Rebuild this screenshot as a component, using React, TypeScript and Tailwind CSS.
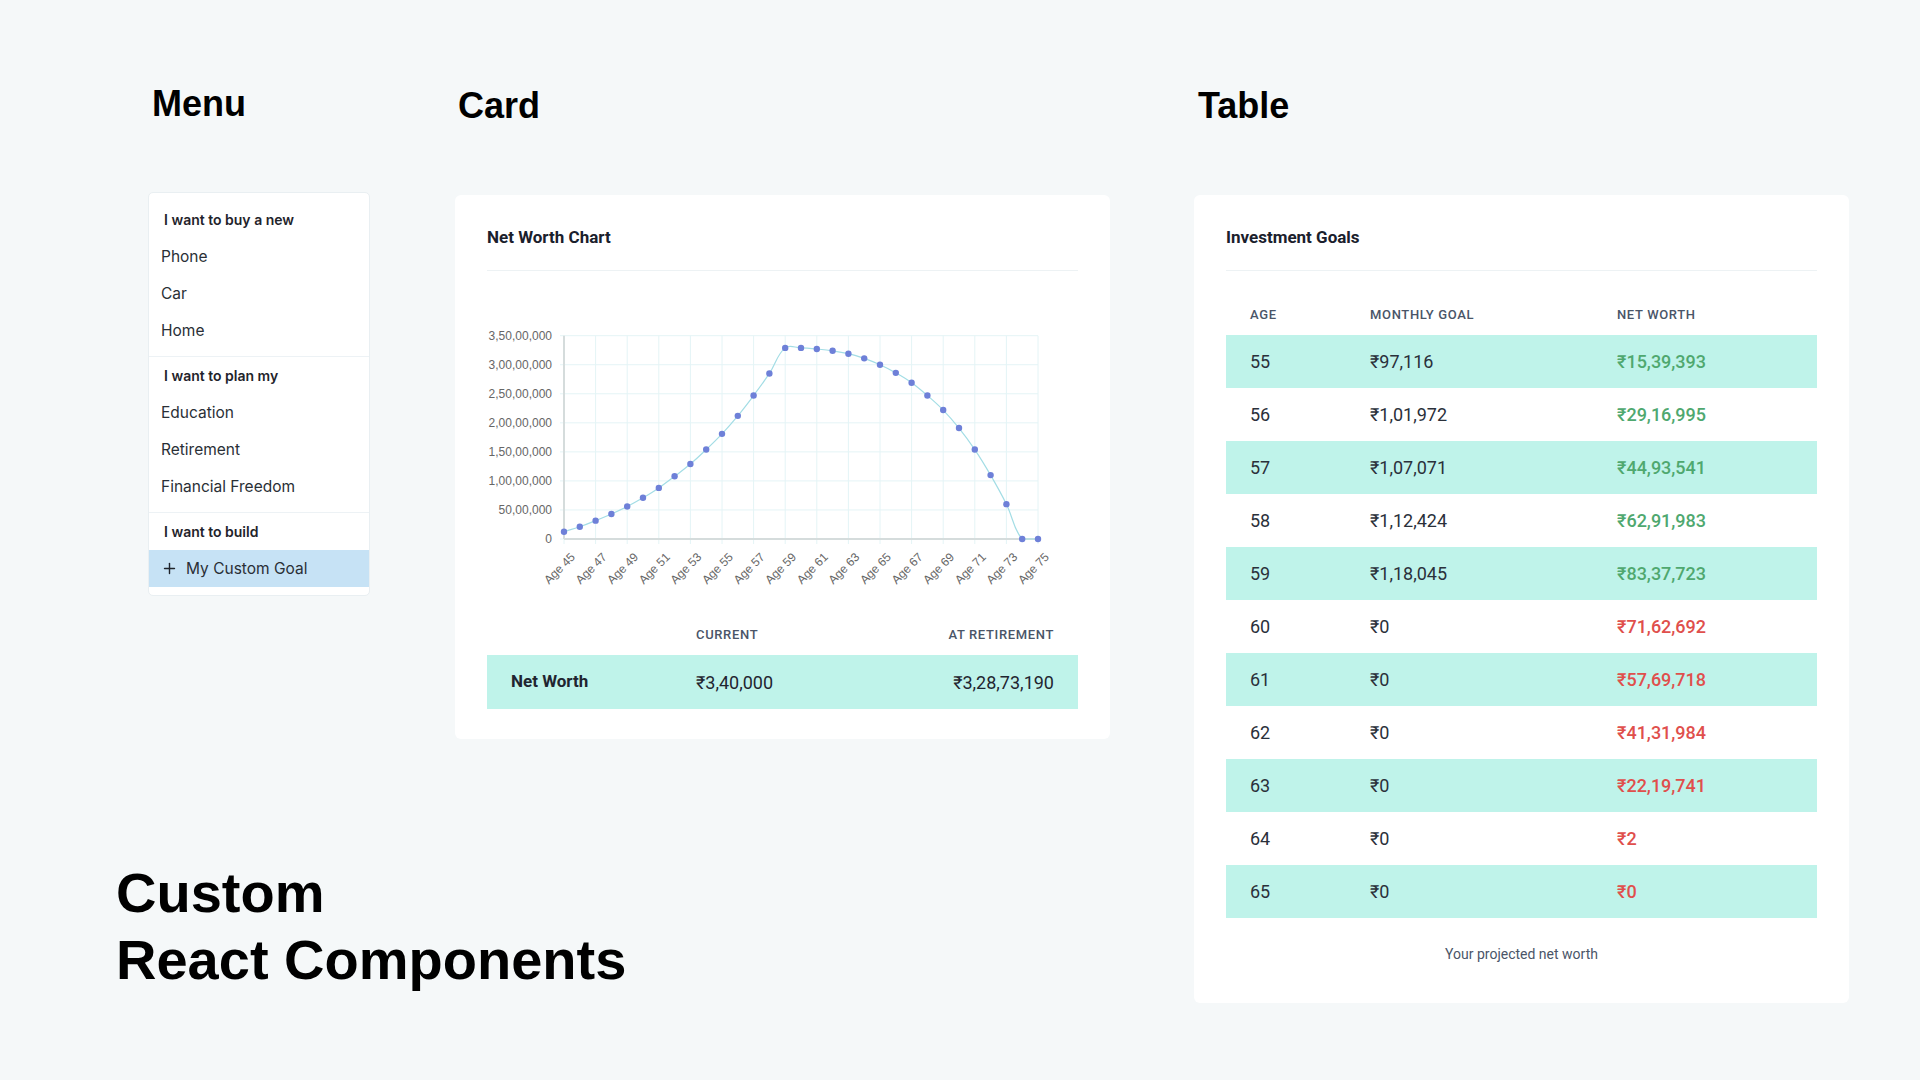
import React from 'react';
import { Plus } from 'lucide-react';

const MENU_GROUPS = [
  { title: 'I want to buy a new', items: ['Phone', 'Car', 'Home'] },
  { title: 'I want to plan my', items: ['Education', 'Retirement', 'Financial Freedom'] },
];

const GOALS = [
  { age: 55, goal: '₹97,116', worth: '₹15,39,393', up: true },
  { age: 56, goal: '₹1,01,972', worth: '₹29,16,995', up: true },
  { age: 57, goal: '₹1,07,071', worth: '₹44,93,541', up: true },
  { age: 58, goal: '₹1,12,424', worth: '₹62,91,983', up: true },
  { age: 59, goal: '₹1,18,045', worth: '₹83,37,723', up: true },
  { age: 60, goal: '₹0', worth: '₹71,62,692', up: false },
  { age: 61, goal: '₹0', worth: '₹57,69,718', up: false },
  { age: 62, goal: '₹0', worth: '₹41,31,984', up: false },
  { age: 63, goal: '₹0', worth: '₹22,19,741', up: false },
  { age: 64, goal: '₹0', worth: '₹2', up: false },
  { age: 65, goal: '₹0', worth: '₹0', up: false },
];

// net worth per year, in lakh
const NET_WORTH = [
  12.6, 21, 31.6, 43, 56, 71, 88, 108, 129, 154, 181, 212, 247, 285, 329, 329, 327, 324, 319, 311, 300, 286,
  269, 247, 222, 191, 154, 110, 60, 0, 0,
];

const Y_LABELS = ['0', '50,00,000', '1,00,00,000', '1,50,00,000', '2,00,00,000', '2,50,00,000', '3,00,00,000', '3,50,00,000'];

const PLOT = { left: 77, right: 551, top: 64.7, zero: 268 };
const STEP = (PLOT.right - PLOT.left) / 30;

const px = (i: number) => PLOT.left + i * STEP;
const py = (v: number) => PLOT.zero - (v / 350) * (PLOT.zero - PLOT.top);

// chart.js style spline, tension 0.4
const splinePath = (pts: { x: number; y: number }[]) => {
  const t = 0.4;
  const cps = pts.map((p, i) => {
    const prev = pts[i - 1] || p;
    const next = pts[i + 1] || p;
    const d01 = Math.hypot(p.x - prev.x, p.y - prev.y);
    const d12 = Math.hypot(next.x - p.x, next.y - p.y);
    const tot = d01 + d12 || 1;
    const fa = (t * d01) / tot;
    const fb = (t * d12) / tot;
    return {
      inX: p.x - fa * (next.x - prev.x),
      inY: Math.min(PLOT.zero, p.y - fa * (next.y - prev.y)),
      outX: p.x + fb * (next.x - prev.x),
      outY: Math.min(PLOT.zero, p.y + fb * (next.y - prev.y)),
    };
  });
  let d = `M${pts[0].x},${pts[0].y}`;
  for (let i = 1; i < pts.length; i++) {
    d += ` C${cps[i - 1].outX},${cps[i - 1].outY} ${cps[i].inX},${cps[i].inY} ${pts[i].x},${pts[i].y}`;
  }
  return d;
};

const NetWorthChart: React.FC = () => {
  const pts = NET_WORTH.map((v, i) => ({ x: px(i), y: py(v) }));
  const evenTicks = Array.from({ length: 16 }, (_, k) => k * 2);

  return (
    <svg width={592} height={344} className="block" style={{ fontFamily: '"Liberation Sans", Arial, sans-serif' }}>
      {/* grid */}
      {Y_LABELS.map((_, k) => {
        const y = PLOT.zero - k * ((PLOT.zero - PLOT.top) / 7);
        return <line key={k} x1={PLOT.left - 4} x2={PLOT.right} y1={y} y2={y} stroke="#e4f4f6" strokeWidth={1} />;
      })}
      {evenTicks.map((i) => (
        <line key={i} x1={px(i)} x2={px(i)} y1={PLOT.top} y2={PLOT.zero + 5} stroke="#e4f4f6" strokeWidth={1} />
      ))}
      <line x1={PLOT.left} x2={PLOT.left} y1={PLOT.top} y2={PLOT.zero} stroke="#d5dcdc" strokeWidth={2} />
      <line x1={PLOT.left} x2={PLOT.right} y1={PLOT.zero} y2={PLOT.zero} stroke="#d5dcdc" strokeWidth={2} />

      {/* y labels */}
      {Y_LABELS.map((label, k) => {
        const y = PLOT.zero - k * ((PLOT.zero - PLOT.top) / 7);
        return (
          <text key={label} x={65} y={y} textAnchor="end" dominantBaseline="central" fontSize={12} fill="#666">
            {label}
          </text>
        );
      })}

      {/* x labels */}
      {evenTicks.map((i) => {
        const x = px(i) + 9;
        const y = PLOT.zero + 16;
        return (
          <text
            key={i}
            x={x}
            y={y}
            textAnchor="end"
            dominantBaseline="central"
            fontSize={12}
            fill="#666"
            transform={`rotate(-45 ${x} ${y})`}
          >
            Age {45 + i}
          </text>
        );
      })}

      {/* series */}
      <path d={splinePath(pts)} fill="none" stroke="#a3dde5" strokeWidth={1.2} />
      {pts.map((p, i) => (
        <circle key={i} cx={p.x} cy={p.y} r={3.2} fill="#6e80d8" />
      ))}
    </svg>
  );
};

const Menu: React.FC = () => (
  <div className="bg-white rounded-[5px] border border-[#e9eff2] pt-2 pb-2" style={{ fontFamily: 'Inter, "Noto Sans", sans-serif' }}>
    {MENU_GROUPS.map((group) => (
      <div key={group.title} className="pt-[9px] pb-[7px] border-b border-[#edf2f5]">
        <div className="pl-[15px] h-5 leading-5 text-[14px] font-semibold text-[#1f242b] mb-2">{group.title}</div>
        {group.items.map((item) => (
          <div key={item} className="pl-[12px] h-[37px] flex items-center text-[15.5px] text-[#2a2f36]">
            {item}
          </div>
        ))}
      </div>
    ))}
    <div className="pt-[9px]">
      <div className="pl-[15px] h-5 leading-5 text-[14px] font-semibold text-[#1f242b] mb-2">I want to build</div>
      <div className="pl-[12px] h-[37px] flex items-center gap-2 text-[15.5px] text-[#2a2f36] bg-[#c6e2f5]">
        <Plus size={17} strokeWidth={2} className="text-[#1f242b]" />
        My Custom Goal
      </div>
    </div>
  </div>
);

const headerCell = 'text-[13px] font-medium tracking-wider uppercase text-[#4a5568]';

const ChartCard: React.FC = () => (
  <div className="bg-white rounded-[6px] px-8 pb-[30px]" style={{ fontFamily: 'Roboto, "Noto Sans", sans-serif' }}>
    <div className="pt-[30px] pb-[21px] border-b border-[#edf2f4] text-[17px] leading-6 font-bold text-[#1a202c]">
      Net Worth Chart
    </div>
    <NetWorthChart />
    <div className="grid grid-cols-[209px_1fr_auto] h-10 items-center">
      <div />
      <div className={headerCell}>Current</div>
      <div className={`${headerCell} pr-6`}>At Retirement</div>
    </div>
    <div className="grid grid-cols-[209px_1fr_auto] h-[54px] items-center bg-[#bff3ea] text-[18px] text-[#1f2530]">
      <div className="pl-6 font-bold text-[17px]">Net Worth</div>
      <div>₹3,40,000</div>
      <div className="pr-6">₹3,28,73,190</div>
    </div>
  </div>
);

const GoalsTable: React.FC = () => (
  <div className="bg-white rounded-[6px] px-8 pb-[39px]" style={{ fontFamily: 'Roboto, "Noto Sans", sans-serif' }}>
    <div className="pt-[30px] pb-[21px] border-b border-[#edf2f4] text-[17px] leading-6 font-bold text-[#1a202c]">
      Investment Goals
    </div>
    <div className="mt-6 grid grid-cols-[144px_247px_1fr] h-10 items-center">
      <div className={`${headerCell} pl-6`}>Age</div>
      <div className={headerCell}>Monthly Goal</div>
      <div className={headerCell}>Net Worth</div>
    </div>
    {GOALS.map((row, idx) => (
      <div
        key={row.age}
        className={`grid grid-cols-[144px_247px_1fr] h-[53px] items-center text-[18px] text-[#2a303a] ${
          idx % 2 === 0 ? 'bg-[#bff3ea]' : 'bg-white'
        }`}
      >
        <div className="pl-6">{row.age}</div>
        <div>{row.goal}</div>
        <div className={`font-medium ${row.up ? 'text-[#4fa86f]' : 'text-[#e04f4c]'}`}>{row.worth}</div>
      </div>
    ))}
    <div className="mt-[26px] h-5 leading-5 text-center text-[14px] text-[#4a5568]">Your projected net worth</div>
  </div>
);

const heading = 'text-[36px] leading-none font-bold text-black';

export default function App() {
  return (
    <div className="w-[1920px] h-[1080px] bg-[#f5f8f9] flex overflow-hidden" style={{ fontFamily: '"Liberation Sans", Arial, sans-serif' }}>
      <div className="ml-[116px] flex flex-col">
        <div className="flex">
          {/* Menu */}
          <div className="ml-8 w-[222px]">
            <h1 className={`${heading} pt-[86px] pl-1`}>Menu</h1>
            <div className="mt-[70px]">
              <Menu />
            </div>
          </div>

          {/* Card */}
          <div className="ml-[85px] w-[655px]">
            <h1 className={`${heading} pt-[88px] pl-[3px]`}>Card</h1>
            <div className="mt-[71px]">
              <ChartCard />
            </div>
          </div>
        </div>

        <div className="mt-[120px] text-[56px] leading-[1.2] font-bold text-black">
          Custom
          <br />
          React Components
        </div>
      </div>

      {/* Table */}
      <div className="ml-[84px] w-[655px]">
        <h1 className={`${heading} pt-[88px] pl-1`}>Table</h1>
        <div className="mt-[71px]">
          <GoalsTable />
        </div>
      </div>
    </div>
  );
}
